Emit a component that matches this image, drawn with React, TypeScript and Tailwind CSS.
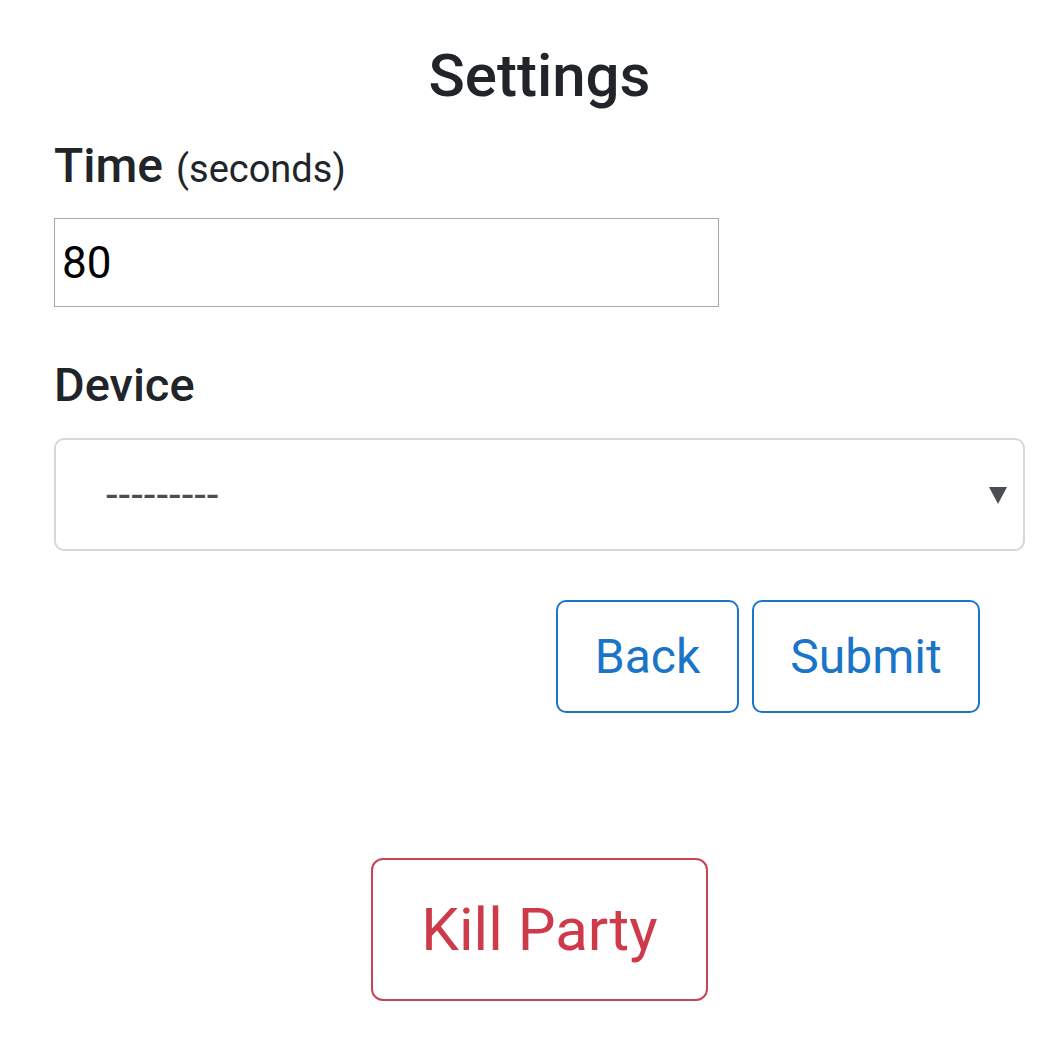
export default function App() {
  return (
    <div className="min-h-screen bg-white text-[#212529]" style={{ fontFamily: "Roboto, 'Liberation Sans', sans-serif" }}>
      <div className="pl-[54px] pr-[30px] pt-[40px]">
        <h1 className="text-center text-[60px] font-medium leading-[72px]">Settings</h1>
        <div className="mt-[24px] flex items-baseline gap-[13px]">
          <span className="text-[48px] font-medium leading-[60px]">Time</span>
          <span className="text-[38px] leading-[60px]">(seconds)</span>
        </div>
        <input
          type="text"
          defaultValue="80"
          className="mt-[19px] h-[89px] w-[665px] border border-[#a9a9a9] px-[7px] text-[44px] text-black outline-none"
        />
        <div className="mt-[48px] text-[47px] font-medium leading-[60px]">Device</div>
        <div className="mt-[23px] flex h-[113px] items-center justify-between rounded-[10px] border-2 border-[#d5d7d9] pl-[50px] pr-[16px]">
          <span className="text-[42px] tracking-[1px] text-[#4a4e52]">---------</span>
          <svg width="18" height="18" viewBox="0 0 18 18">
            <path d="M0 1 H18 L9 18 Z" fill="#4a4e52" />
          </svg>
        </div>
        <div className="mt-[49px] flex justify-end gap-[13px] pr-[45px]">
          <button className="h-[113px] w-[183px] rounded-[10px] border-2 border-[#1a75c9] text-[48px] text-[#1a75c9]">
            Back
          </button>
          <button className="h-[113px] w-[228px] rounded-[10px] border-2 border-[#1a75c9] text-[48px] text-[#1a75c9]">
            Submit
          </button>
        </div>
        <div className="mt-[145px] flex justify-center">
          <button className="h-[143px] w-[337px] rounded-[12px] border-2 border-[#c84552] text-[60px] text-[#cf3a4a]">
            Kill Party
          </button>
        </div>
      </div>
    </div>
  )
}
